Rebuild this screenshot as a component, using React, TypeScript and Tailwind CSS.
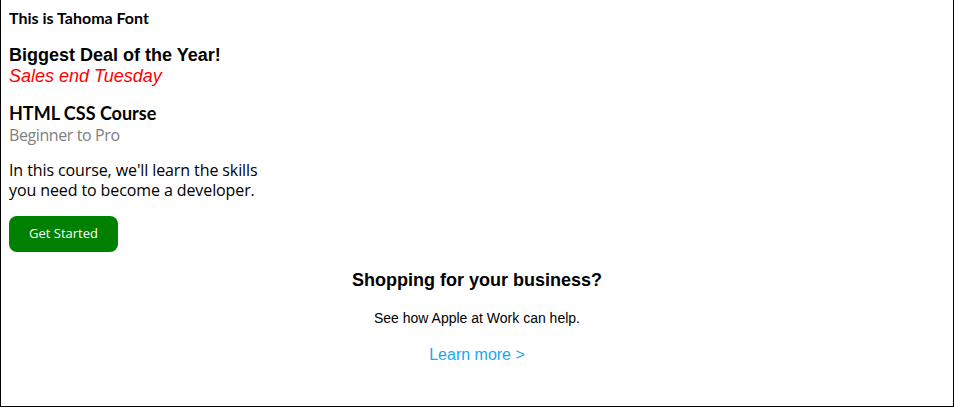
export default function App() {
  const fira = { fontFamily: '"Open Sans", sans-serif' };
  const firaBold = { fontFamily: 'Lato, sans-serif' };
  const arial = { fontFamily: '"Liberation Sans", Arial, sans-serif' };
  return (
    <div className="h-[407px] w-full border-x border-b border-black bg-white text-black">
      <div className="px-2 pt-2">
        <p style={firaBold} className="text-[16px] font-bold leading-[19px]">
          This is Tahoma Font
        </p>
        <div style={arial} className="mt-[18px]">
          <p className="text-[18px] font-bold leading-[21px]">Biggest Deal of the Year!</p>
          <p className="text-[18px] italic leading-[21px] text-[#ff0000]">Sales end Tuesday</p>
        </div>
        <div className="mt-[17px]">
          <p style={firaBold} className="text-[18px] font-bold leading-[19px]">
            HTML CSS Course
          </p>
          <p style={fira} className="mt-[3px] text-[16px] leading-[19px] tracking-[-0.4px] text-[#808080]">
            Beginner to Pro
          </p>
        </div>
        <p style={fira} className="mt-[15px] text-[16px] leading-[20px] tracking-[-0.1px]">
          In this course, we'll learn the skills
          <br />
          you need to become a developer.
        </p>
        <button
          style={fira}
          className="mt-[16px] h-[36px] rounded-[8px] bg-[#008000] px-[20px] text-[13px] text-white"
        >
          Get Started
        </button>
      </div>
      <div style={arial} className="flex flex-col items-center text-center">
        <p className="mt-[18px] text-[18px] font-bold leading-[21px]">Shopping for your business?</p>
        <p className="mt-[19px] text-[14px] leading-[16px]">See how Apple at Work can help.</p>
        <p className="mt-[20px] text-[16px] leading-[18px] text-[#1aa7f5]">Learn more &gt;</p>
      </div>
    </div>
  );
}
